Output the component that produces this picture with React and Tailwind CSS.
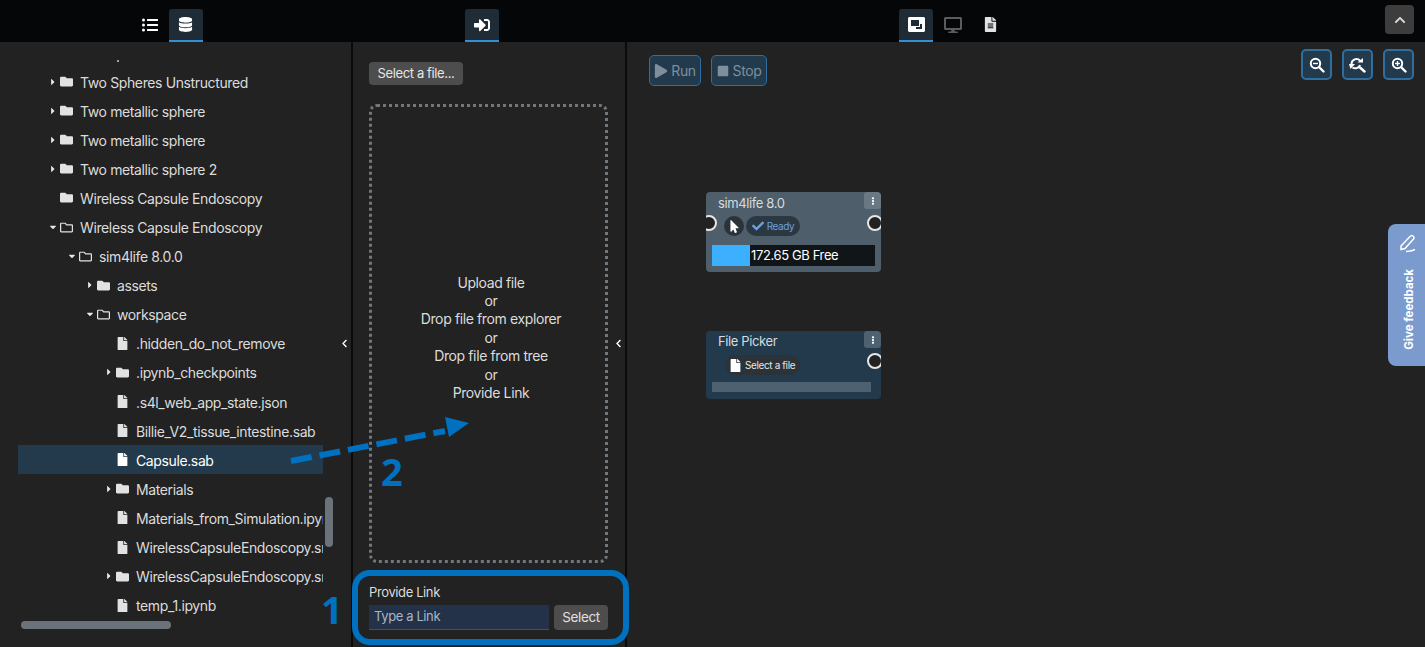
import {
  FaCaretDown,
  FaCaretRight,
  FaCheck,
  FaChevronLeft,
  FaChevronUp,
  FaDatabase,
  FaDesktop,
  FaEllipsisV,
  FaFile,
  FaFileAlt,
  FaFolder,
  FaListUl,
  FaMousePointer,
  FaPlay,
  FaRegFolder,
  FaSignInAlt,
  FaStop,
} from "react-icons/fa";

const indent = ["pl-[30px]", "pl-[49px]", "pl-[67px]", "pl-[86px]"];

const tree = [
  { name: "Two Spheres Unstructured", depth: 0, type: "folder", caret: "right" },
  { name: "Two metallic sphere", depth: 0, type: "folder", caret: "right" },
  { name: "Two metallic sphere", depth: 0, type: "folder", caret: "right" },
  { name: "Two metallic sphere 2", depth: 0, type: "folder", caret: "right" },
  { name: "Wireless Capsule Endoscopy", depth: 0, type: "folder" },
  { name: "Wireless Capsule Endoscopy", depth: 0, type: "open", caret: "down" },
  { name: "sim4life 8.0.0", depth: 1, type: "open", caret: "down" },
  { name: "assets", depth: 2, type: "folder", caret: "right" },
  { name: "workspace", depth: 2, type: "open", caret: "down" },
  { name: ".hidden_do_not_remove", depth: 3, type: "file" },
  { name: ".ipynb_checkpoints", depth: 3, type: "folder", caret: "right" },
  { name: ".s4l_web_app_state.json", depth: 3, type: "file" },
  { name: "Billie_V2_tissue_intestine.sab", depth: 3, type: "file" },
  { name: "Capsule.sab", depth: 3, type: "file", selected: true },
  { name: "Materials", depth: 3, type: "folder", caret: "right" },
  { name: "Materials_from_Simulation.ipynb", depth: 3, type: "file" },
  { name: "WirelessCapsuleEndoscopy.smash", depth: 3, type: "file" },
  { name: "WirelessCapsuleEndoscopy.smash_Results", depth: 3, type: "folder", caret: "right" },
  { name: "temp_1.ipynb", depth: 3, type: "file" },
];

function TreeRow({ item }) {
  const Icon = item.type === "file" ? FaFile : item.type === "open" ? FaRegFolder : FaFolder;
  return (
    <div
      className={`flex h-[29.1px] items-center whitespace-nowrap overflow-hidden ${indent[item.depth]} ${
        item.selected ? "bg-[#233a4c] text-white" : "text-[#dcdcdc]"
      }`}
    >
      <span className="flex w-[12px] shrink-0 justify-start text-[10px] text-[#e8e8e8]">
        {item.caret === "right" && <FaCaretRight />}
        {item.caret === "down" && <FaCaretDown />}
      </span>
      <Icon className={`shrink-0 text-[13px] ${item.selected ? "text-white" : "text-[#e2e2e2]"}`} />
      <span className="ml-[7px] pt-[1px]">{item.name}</span>
    </div>
  );
}

function Tab({ active, children }) {
  return (
    <div
      className={`flex h-[33px] w-[34px] items-center justify-center rounded-t-[3px] border-b-2 ${
        active ? "border-[#2f8fd8] bg-[#1f2c36] text-white" : "border-transparent"
      }`}
    >
      {children}
    </div>
  );
}

function ZoomBtn({ children }) {
  return (
    <div className="flex h-[31px] w-[31px] items-center justify-center rounded-[5px] border-2 border-[#2f6f9f] bg-[#233a4c] text-white">
      {children}
    </div>
  );
}

function LensIcon({ plus }) {
  return (
    <svg width="16" height="16" viewBox="0 0 16 16" fill="none" stroke="#fff">
      <circle cx="6.5" cy="6.5" r="4.7" strokeWidth="2" />
      <path strokeWidth="2.4" strokeLinecap="round" d="M10.5 10.5l4 4" />
      <path strokeWidth="1.4" d="M4 6.5h5" />
      {plus && <path strokeWidth="1.4" d="M6.5 4v5" />}
    </svg>
  );
}

function Port({ className }) {
  return <div className={`absolute h-[16px] w-[16px] rounded-full border-2 border-[#e6e6e6] bg-[#222222] ${className}`} />;
}

export default function App() {
  return (
    <div className="relative flex h-[647px] w-[1425px] flex-col overflow-hidden bg-[#222222] font-['Inter','Noto_Sans',sans-serif] text-[14px] tracking-[-0.38px] text-[#dcdcdc]">
      {/* top bar */}
      <div className="flex h-[42px] shrink-0 items-end bg-[#050608]">
        <div className="flex w-[351px] justify-center gap-[2px] pr-[16px]">
          <Tab>
            <FaListUl className="text-[16px] text-white" />
          </Tab>
          <Tab active>
            <FaDatabase className="text-[15px]" />
          </Tab>
        </div>
        <div className="ml-[2px] flex w-[272px] justify-center pr-[14px]">
          <Tab active>
            <FaSignInAlt className="text-[16px]" />
          </Tab>
        </div>
        <div className="ml-[2px] flex flex-1 justify-center pr-[146px]">
          <div className="flex gap-[3px]">
            <Tab active>
              <svg width="17" height="15" viewBox="0 0 17 15">
                <path fill="#fff" d="M1 0h15l1 1v13l-1 1H1l-1-1V1z" />
                <path fill="#1f2c36" d="M3 3h8v6H3z" />
                <path fill="#1f2c36" d="M14 7v5H8v-2h4V7z" />
              </svg>
            </Tab>
            <Tab>
              <FaDesktop className="text-[18px] text-[#5c5c5c]" />
            </Tab>
            <Tab>
              <FaFileAlt className="text-[15px] text-[#e2e2e2]" />
            </Tab>
          </div>
        </div>
      </div>

      {/* panels */}
      <div className="flex min-h-0 flex-1">
        {/* tree */}
        <div className="relative w-[351px] shrink-0 overflow-hidden">
          <div className="absolute left-[117px] top-[18px] h-[2px] w-[2px] rounded-full bg-[#cccccc]" />
          <div className="ml-[18px] mt-[25px] w-[305px]">
            {tree.map((item, i) => (
              <TreeRow key={i} item={item} />
            ))}
          </div>
          <div className="absolute left-[325px] top-[455px] h-[50px] w-[8px] rounded-full bg-[#6b727a]" />
          <div className="absolute left-[21px] top-[579px] h-[8px] w-[150px] rounded-full bg-[#6b727a]" />
          <div className="absolute left-[340px] top-[297px] text-[9px] text-white">
            <FaChevronLeft />
          </div>
        </div>

        <div className="w-[2px] shrink-0 bg-[#0a0a0a]" />

        {/* file picker */}
        <div className="relative flex w-[272px] shrink-0 flex-col px-[16px] pb-[17px] pt-[20px]">
          <div className="flex h-[23px] w-[94px] items-center justify-center rounded-[4px] bg-[#4d4d4d] text-[13px] text-[#e6e6e6]">
            Select a file...
          </div>
          <div className="mt-[19px] flex h-[460px] w-[239px] flex-col items-center justify-center rounded-[8px] border-[3px] border-dotted border-[#70777d] pl-[5px] pt-[9px] text-center leading-[18.4px] text-[#dcdcdc]">
            <div>Upload file</div>
            <div>or</div>
            <div>Drop file from explorer</div>
            <div>or</div>
            <div>Drop file from tree</div>
            <div>or</div>
            <div>Provide Link</div>
          </div>
          <div className="mt-[21px] text-[13px] leading-[16px]">Provide Link</div>
          <div className="mt-[5px] flex gap-[5px]">
            <div className="flex h-[25px] w-[180px] items-center border-b border-[#2f5770] bg-[#233249] pl-[5px] text-[13px] text-[#a9b6c4]">
              Type a Link
            </div>
            <div className="flex h-[25px] w-[54px] items-center justify-center rounded-[4px] bg-[#4d4d4d] text-[13.5px] text-[#e0e0e0]">
              Select
            </div>
          </div>
          <div className="absolute left-[261px] top-[297px] text-[9px] text-white">
            <FaChevronLeft />
          </div>
        </div>

        <div className="w-[2px] shrink-0 bg-[#0a0a0a]" />

        {/* workbench */}
        <div className="relative flex-1">
          <div className="ml-[22px] mt-[13px] flex gap-[10px]">
            <div className="flex h-[31px] w-[52px] items-center justify-center gap-[3px] rounded-[5px] border border-[#2f6f9f] bg-[#233a4c] text-[#7e8e9b]">
              <FaPlay className="text-[14px]" />
              Run
            </div>
            <div className="flex h-[31px] w-[56px] items-center justify-center gap-[4px] rounded-[5px] border border-[#2f6f9f] bg-[#233a4c] text-[#7e8e9b]">
              <FaStop className="text-[12px]" />
              Stop
            </div>
          </div>

          <div className="absolute right-[11px] top-[7px] flex gap-[10px]">
            <ZoomBtn>
              <LensIcon />
            </ZoomBtn>
            <ZoomBtn>
              <svg width="18" height="16" viewBox="0 0 18 16" fill="none" stroke="#fff">
                <path strokeWidth="2" d="M2.5 7a5 5 0 0 1 8.5-3.5M11 8a5 5 0 0 1-7.5 2.5" />
                <path fill="#fff" strokeWidth="0" d="M8.5 5.5h5.5V1zM0 7h6l-4.5 5z" />
                <path strokeWidth="2.4" strokeLinecap="round" d="M11 10.5l4.5 4" />
              </svg>
            </ZoomBtn>
            <ZoomBtn>
              <LensIcon plus />
            </ZoomBtn>
          </div>

          {/* nodes */}
          <div className="absolute left-[79px] top-[150px] h-[80px] w-[175px] overflow-hidden rounded-[4px] bg-[#4e5f6b]">
            <div className="pl-[12px] pt-[2px] text-[13px] text-[#d6dbdf]">sim4life 8.0</div>
            <div className="absolute right-0 top-0 flex h-[17px] w-[17px] items-center justify-center rounded-[3px] bg-[#6a7883] text-[8px] text-white">
              <FaEllipsisV />
            </div>
            <Port className="-left-[5px] top-[23px]" />
            <Port className="-right-[2px] top-[23px]" />
            <div className="absolute left-[18px] top-[24px] flex h-[20px] w-[20px] items-center justify-center rounded-full bg-[#2b3338] text-[13px] text-white">
              <FaMousePointer />
            </div>
            <div className="absolute left-[40px] top-[24px] flex h-[20px] w-[54px] items-center justify-center gap-[3px] rounded-full bg-[#2b3842] text-[10px] text-[#6b9fe0]">
              <FaCheck className="text-[12px]" />
              Ready
            </div>
            <div className="absolute left-[6px] top-[53px] flex h-[21px] w-[163px] items-center bg-[#111518] text-[13px] text-white">
              <div className="mr-[1px] h-full w-[38px] bg-[#3cb0ff]" />
              172.65 GB Free
            </div>
          </div>

          <div className="absolute left-[79px] top-[289px] h-[68px] w-[175px] overflow-hidden rounded-[4px] bg-[#233a4c]">
            <div className="pl-[12px] pt-[1px] text-[13px] text-[#d6dbdf]">File Picker</div>
            <div className="absolute right-0 top-0 flex h-[17px] w-[17px] items-center justify-center rounded-[3px] bg-[#4e6170] text-[8px] text-white">
              <FaEllipsisV />
            </div>
            <Port className="-right-[2px] top-[22px]" />
            <div className="absolute left-[19px] top-[24px] flex h-[20px] w-[75px] items-center gap-[3px] rounded-full bg-[#2b3338] pl-[4px] text-[10px] text-[#e6e6e6]">
              <FaFile className="text-[13px] text-white" />
              Select a file
            </div>
            <div className="absolute left-[6px] top-[51px] h-[10px] w-[159px] bg-[#4e6170]" />
          </div>
        </div>
      </div>

      {/* collapse header */}
      <div className="absolute left-[1385px] top-[5px] flex h-[29px] w-[29px] items-center justify-center rounded-[4px] bg-[#3d3d3d] text-[12px] text-[#d8d8d8]">
        <FaChevronUp />
      </div>

      {/* feedback tab */}
      <div className="absolute left-[1388px] top-[224px] flex h-[142px] w-[37px] flex-col items-center rounded-l-[8px] bg-[#7b9bcf] pt-[10px] text-white">
        <svg className="ml-[3px]" width="20" height="20" viewBox="0 0 20 20" fill="none" stroke="#fff" strokeWidth="1.5">
          <path d="M3 12L12 2.5a2 2 0 0 1 3.5 2.5L7 14.5l-4 1z" />
          <path d="M8 17.5c3 0 6-.5 9-2" />
        </svg>
        <div className="ml-[6px] mt-[15px] rotate-180 text-[11.5px] font-bold tracking-normal [writing-mode:vertical-rl]">
          Give feedback
        </div>
      </div>

      {/* annotations */}
      <div className="absolute left-[352px] top-[570px] h-[75px] w-[277px] rounded-[18px] border-[6px] border-[#0070c0]" />
      <div className="absolute left-[321px] top-[584px] font-['Open_Sans',sans-serif] text-[38px] font-bold leading-[50px] tracking-normal text-[#0070c0]">
        1
      </div>
      <div className="absolute left-[381px] top-[446px] font-['Open_Sans',sans-serif] text-[38px] font-bold leading-[50px] tracking-normal text-[#0070c0]">
        2
      </div>
      <svg className="absolute left-[285px] top-[410px]" width="190" height="60" viewBox="0 0 190 60">
        <path d="M6 51L160 21" stroke="#0070c0" strokeWidth="6" strokeDasharray="21 8" fill="none" />
        <path d="M160 7L184 13L164 27Z" fill="#0070c0" />
      </svg>
    </div>
  );
}
